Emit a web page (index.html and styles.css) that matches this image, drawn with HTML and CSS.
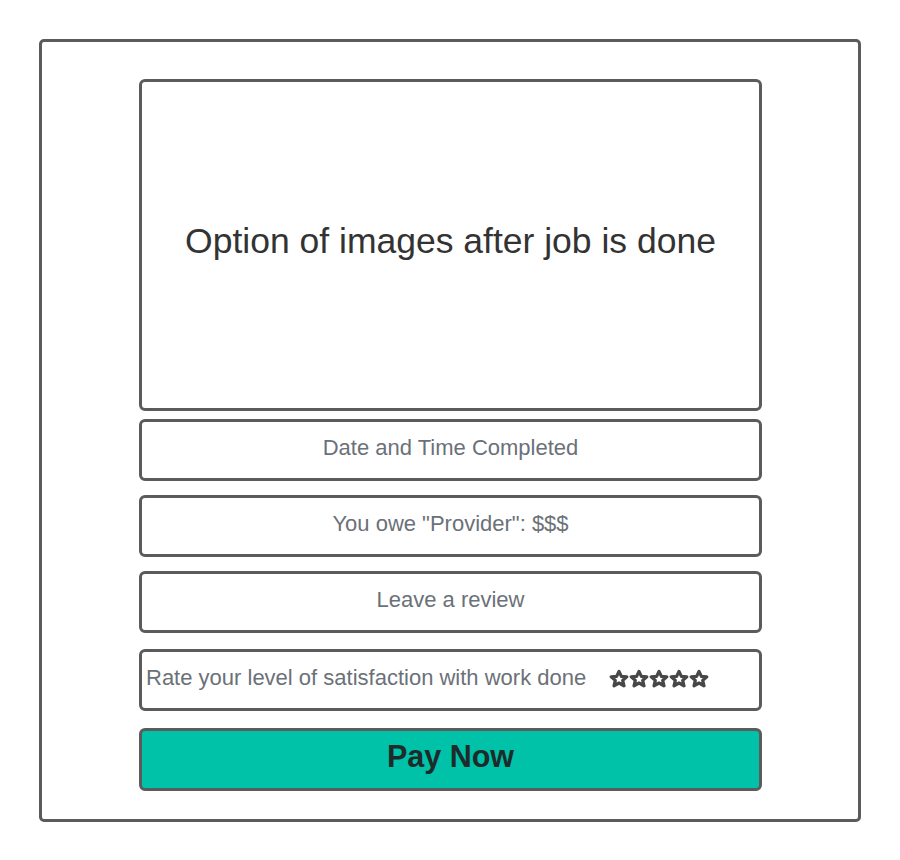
FILE: index.html
```html
<!DOCTYPE html>
<html>
<head>
<meta charset="utf-8">
<link rel="stylesheet" href="styles.css">
</head>
<body>
<div class="frame">
  <div class="col">
    <div class="box images">Option of images after job is done</div>
    <div class="box row date">Date and Time Completed</div>
    <div class="box row owe">You owe "Provider": $$$</div>
    <div class="box row review">Leave a review</div>
    <div class="box row rate">
      <span class="rate-text">Rate your level of satisfaction with work done</span>
      <span class="stars">
        <svg viewBox="0 0 20 20" class="star"><polygon points="10,2.4 12.4,7.4 17.8,7.8 13.7,11.4 15,16.8 10,14 5,16.8 6.3,11.4 2.2,7.8 7.6,7.4"/></svg>
        <svg viewBox="0 0 20 20" class="star"><polygon points="10,2.4 12.4,7.4 17.8,7.8 13.7,11.4 15,16.8 10,14 5,16.8 6.3,11.4 2.2,7.8 7.6,7.4"/></svg>
        <svg viewBox="0 0 20 20" class="star"><polygon points="10,2.4 12.4,7.4 17.8,7.8 13.7,11.4 15,16.8 10,14 5,16.8 6.3,11.4 2.2,7.8 7.6,7.4"/></svg>
        <svg viewBox="0 0 20 20" class="star"><polygon points="10,2.4 12.4,7.4 17.8,7.8 13.7,11.4 15,16.8 10,14 5,16.8 6.3,11.4 2.2,7.8 7.6,7.4"/></svg>
        <svg viewBox="0 0 20 20" class="star"><polygon points="10,2.4 12.4,7.4 17.8,7.8 13.7,11.4 15,16.8 10,14 5,16.8 6.3,11.4 2.2,7.8 7.6,7.4"/></svg>
      </span>
    </div>
    <div class="box pay">Pay Now</div>
  </div>
</div>
</body>
</html>
```
FILE: styles.css
```css
html, body {
  margin: 0;
  padding: 0;
  background: #ffffff;
}
body {
  font-family: "Liberation Sans", Arial, sans-serif;
}
.frame {
  box-sizing: border-box;
  margin: 39px 0 0 39px;
  width: 822px;
  height: 783px;
  border: 3px solid #5b5b5b;
  border-radius: 5px;
  padding: 37px 0 0 97px;
}
.col {
  width: 623px;
  display: flex;
  flex-direction: column;
}
.box {
  box-sizing: border-box;
  border: 3px solid #5b5b5b;
  border-radius: 6px;
  display: flex;
  align-items: center;
  justify-content: center;
}
.images {
  height: 332px;
  font-size: 35.5px;
  color: #333333;
  padding-bottom: 7px;
}
.row {
  height: 62px;
  font-size: 22px;
  color: #6b7178;
  padding-bottom: 4px;
}
.date { margin-top: 8px; }
.owe { margin-top: 14px; }
.review { margin-top: 14px; }
.rate {
  margin-top: 16px;
  justify-content: flex-start;
  padding-left: 4px;
  padding-bottom: 4px;
}
.rate-text {
  font-size: 22px;
}
.stars {
  display: flex;
  margin-left: 23px;
  margin-top: 2px;
}
.star {
  width: 20px;
  height: 20px;
}
.star polygon {
  fill: none;
  stroke: #474747;
  stroke-width: 3.2;
  stroke-linejoin: round;
}
.pay {
  margin-top: 17px;
  height: 63px;
  background: #00c2a8;
  font-size: 30.5px;
  font-weight: bold;
  color: #1e2b2b;
  padding-bottom: 7px;
}
```
